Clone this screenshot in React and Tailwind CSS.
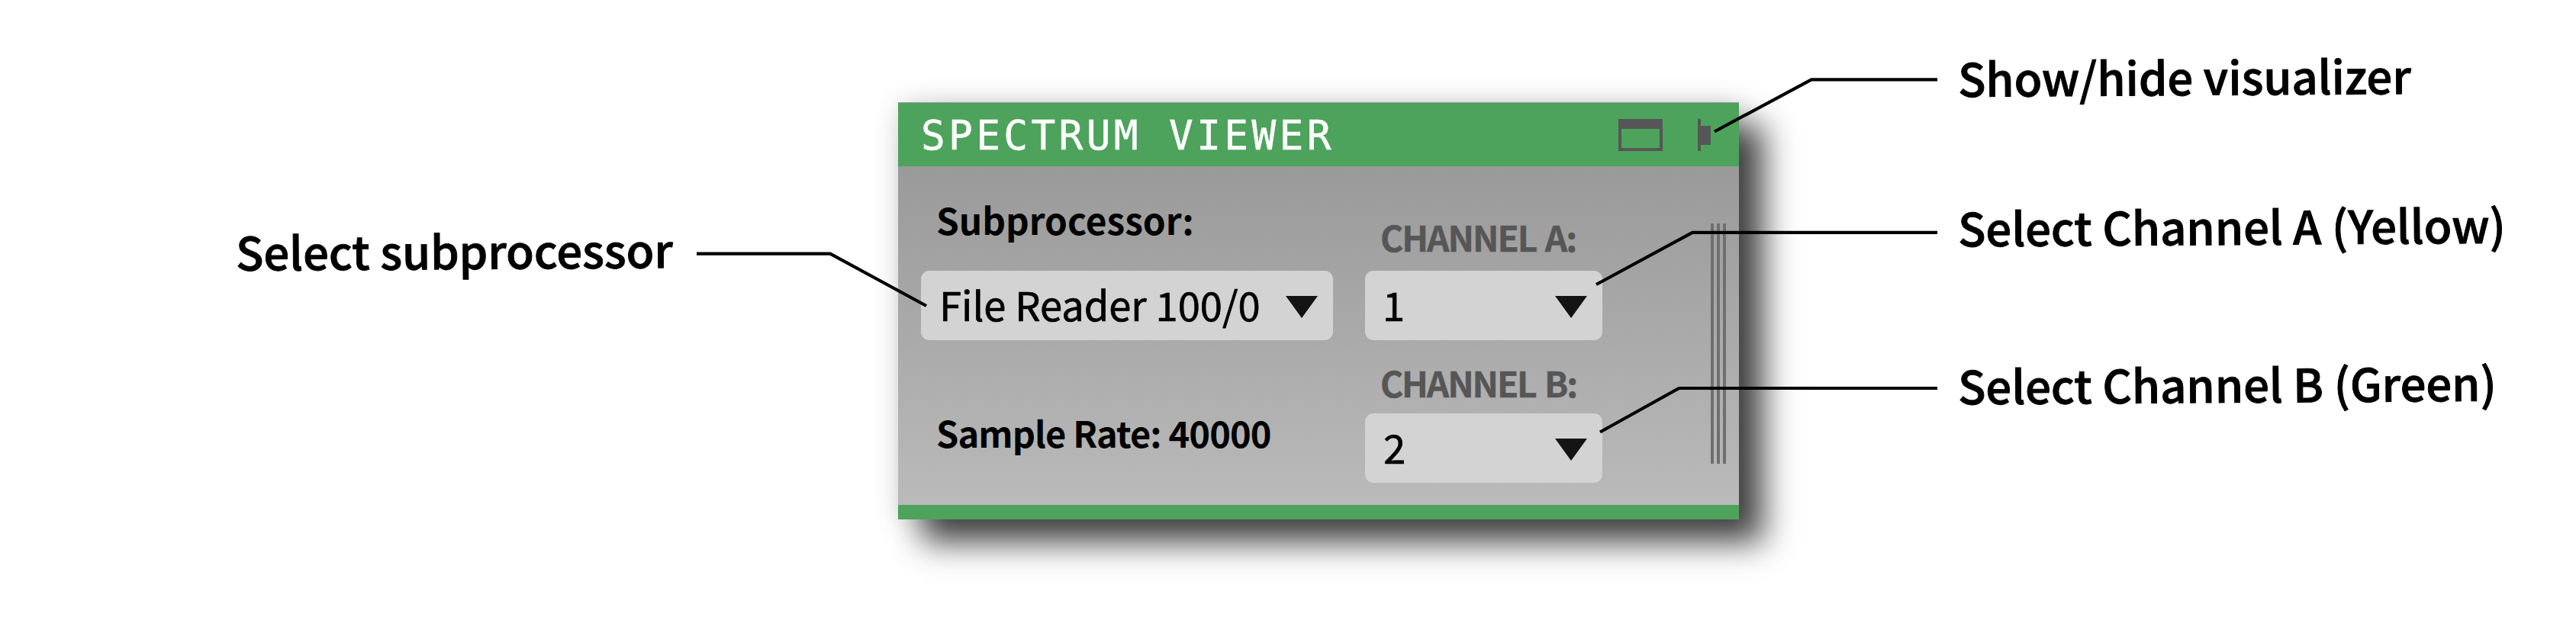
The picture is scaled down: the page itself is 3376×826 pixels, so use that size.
function Callout({ className = "", children }) {
  return (
    <div
      className={`w-fit whitespace-nowrap text-[59.8px] leading-[60px] font-medium -rotate-[0.37deg] [-webkit-text-stroke:0.9px_#000] ${className}`}
    >
      {children}
    </div>
  );
}

function Select({ value, className, textClass }) {
  return (
    <div
      className={`flex h-[91px] items-center justify-between rounded-[11px] bg-[#d3d3d3] pr-5 ${className}`}
    >
      <span
        className={`pb-[5px] text-[52.5px] leading-[80px] [-webkit-text-stroke:0.7px_#000] ${textClass}`}
      >
        {value}
      </span>
      <svg width="42" height="29" viewBox="0 0 42 29" className="mt-[3px]">
        <path d="M0 0H42L21 29Z" fill="#141414" />
      </svg>
    </div>
  );
}

function Header() {
  return (
    <div className="flex h-[83px] items-center bg-[#4da35b] pl-[30px]">
      <h1 className="w-[914px] pt-[3px] font-['DejaVu_Sans_Mono',monospace] text-[52.7px] leading-[70px] tracking-[4.4px] whitespace-pre text-white [-webkit-text-stroke:0.6px_#fff]">
        SPECTRUM VIEWER
      </h1>
      <svg width="58" height="42" viewBox="0 0 58 42" fill="#565656" className="shrink-0">
        <path fillRule="evenodd" d="M0 0H58V42H0ZM4 13V38H54V13Z" />
      </svg>
      <svg width="17" height="42" viewBox="0 0 17 42" fill="#565656" className="ml-[46px] shrink-0">
        <path d="M0 0H4V9H17V34H4V42H0Z" />
      </svg>
    </div>
  );
}

function Grip() {
  return (
    <div className="mt-[75px] ml-[142px] flex h-[315px] gap-1">
      <div className="w-1 bg-[#6f6f6f]" />
      <div className="w-1 bg-[#6f6f6f]" />
      <div className="w-1 bg-[#6f6f6f]" />
    </div>
  );
}

function Body() {
  return (
    <div className="flex h-[444px] bg-linear-to-b from-[#9a9a9a] to-[#bababa] pl-[30px]">
      <div className="w-[540px] pt-10">
        <div className="pl-5 text-[47.8px] leading-[60px] font-bold">Subprocessor:</div>
        <Select value="File Reader 100/0" className="mt-[37px]" textClass="pl-6" />
        <div className="mt-[91px] pl-5 text-[47px] leading-[60px] font-bold tracking-[-0.9px]">
          Sample Rate: 40000
        </div>
      </div>
      <div className="ml-[42px] w-[311px] pt-[62px] text-[#565656]">
        <div className="pl-5 text-[46px] leading-[60px] font-bold tracking-[-2px] [word-spacing:3px] [-webkit-text-stroke:0.5px_#565656]">
          CHANNEL A:
        </div>
        <Select value="1" className="mt-[15px] text-black" textClass="pl-[23px]" />
        <div className="mt-[25px] pl-5 text-[46px] leading-[60px] font-bold tracking-[-2.1px] [word-spacing:3px] [-webkit-text-stroke:0.5px_#565656]">
          CHANNEL B:
        </div>
        <Select value="2" className="mt-[11px] text-black" textClass="pl-[24px]" />
      </div>
      <Grip />
    </div>
  );
}

export default function App() {
  return (
    <div className="relative flex h-[826px] w-[3376px] overflow-hidden bg-white font-['Noto_Sans_CJK_SC',sans-serif] text-black">
      <div className="w-[1177px] shrink-0 pt-[297px] pl-[309px]">
        <Callout>Select subprocessor</Callout>
      </div>
      <div className="mt-[134px] h-[547px] w-[1102px] shrink-0 border-t border-[#9d9d9d] shadow-[32px_30px_40px_rgba(0,0,0,0.73),0_0_32px_rgba(0,0,0,0.15)]">
        <Header />
        <Body />
        <div className="h-[19px] bg-[#4da35b]" />
      </div>
      <div className="flex flex-col pt-[69px] pl-[287px]">
        <Callout>Show/hide visualizer</Callout>
        <Callout className="mt-[136px]">Select Channel A (Yellow)</Callout>
        <Callout className="mt-[147px]">Select Channel B (Green)</Callout>
      </div>
      <svg
        className="pointer-events-none absolute inset-0"
        width="3376"
        height="826"
        fill="none"
        stroke="#000"
        strokeWidth="4.2"
      >
        <path d="M913 332.6H1088L1214 401" />
        <path d="M2539 104.3H2374L2247 172.5" />
        <path d="M2539 304.8H2218L2092 373" />
        <path d="M2539 509H2200.5L2097 566.5" />
      </svg>
    </div>
  );
}
